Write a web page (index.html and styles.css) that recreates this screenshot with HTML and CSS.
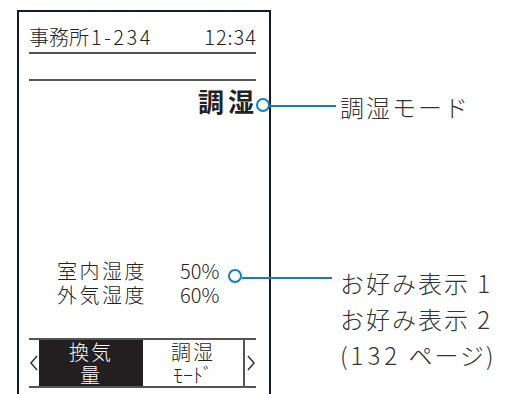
FILE: index.html
```html
<!DOCTYPE html>
<html lang="ja">

<head>
    <meta charset="UTF-8">
    <meta name="viewport" content="width=device-width, initial-scale=1.0">
    <title>調湿モード</title>
    <link rel="stylesheet" href="styles.css">
</head>

<body>
    <div class="page">
        <div class="device">
            <div class="status">
                <span>事務所<span class="num">1-234</span></span>
                <span class="clock">12:34</span>
            </div>
            <div class="rule"></div>

            <div class="mode">
                <span class="mode-name">調湿</span>
                <span class="pin"></span>
            </div>

            <div class="readings">
                <span class="label">室内湿度</span>
                <span>50%</span>
                <span class="pin"></span>
                <span class="label">外気湿度</span>
                <span>60%</span>
            </div>

            <div class="menu">
                <span class="arrow">
                    <svg width="8" height="16" viewBox="0 0 8 16"><polyline points="7,1 1,8 7,15" /></svg>
                </span>
                <div class="menu-item active">換気<br>量</div>
                <div class="menu-item">調湿<br><span class="sub">ﾓｰﾄﾞ</span></div>
                <span class="arrow next">
                    <svg width="8" height="16" viewBox="0 0 8 16"><polyline points="1,1 7,8 1,15" /></svg>
                </span>
            </div>
        </div>

        <!-- callouts lie over the frame border -->
        <div class="callout callout-mode">
            <span class="leader"></span>
            <p>調湿モード</p>
        </div>
        <div class="callout callout-disp">
            <span class="leader"></span>
            <p>お好み表示 1<br>お好み表示 2<br>(<span class="num">132</span> ページ)</p>
        </div>
    </div>
</body>

</html>
```

FILE: styles.css
```css
* {
    padding: 0;
    margin: 0;
    box-sizing: border-box;
}

body {
    background-color: #fff;
    font-family: "Noto Sans CJK JP", "Noto Sans", sans-serif;
}

.page {
    position: relative;
    width: 513px;
    height: 394px;
    overflow: hidden;
}

.device {
    margin: 10px 0 0 17px;
    width: 254px;
    height: 400px;
    border: 2px solid #17173a;
    border-bottom: none;
    padding: 0 13px 0 10px;
    color: #222;
    font-weight: 300;
}

.status {
    display: flex;
    justify-content: space-between;
    margin-top: 13px;
    padding-bottom: 3px;
    font-size: 20px;
    line-height: 24px;
    border-bottom: 2px solid #555;
}

.status .num {
    margin-left: 2px;
    letter-spacing: 2.5px;
}

.clock {
    letter-spacing: 1px;
    margin-right: -1px;
}

.rule {
    margin-top: 25px;
    border-top: 2px solid #555;
}

.mode {
    display: flex;
    justify-content: flex-end;
    align-items: center;
    margin-top: 5px;
    margin-right: -14px;
}

.mode-name {
    font-size: 26px;
    line-height: 30px;
    font-weight: bold;
    letter-spacing: 4px;
    margin-right: -2px;
}

.mode .pin {
    margin-top: 8px;
}

.pin {
    display: block;
    width: 14px;
    height: 14px;
    border: 2px solid #0c7fc6;
    border-radius: 50%;
    background-color: #fff;
}

.readings {
    display: grid;
    grid-template-columns: 123px 48px 14px;
    margin-top: 143px;
    margin-left: 28px;
    font-size: 20px;
    line-height: 23px;
}

.readings .label {
    letter-spacing: 2.5px;
}

.readings .pin {
    grid-column: 3;
    grid-row: 1;
    align-self: start;
    margin-top: 10px;
}

.menu {
    display: grid;
    grid-template-columns: 10px 104px 100px 2px 11px;
    margin-top: 32px;
    border-top: 2px solid #555;
    border-bottom: 2px solid #555;
}

.menu-item {
    font-size: 20px;
    line-height: 23px;
    letter-spacing: 2px;
    text-align: center;
}

.menu-item.active {
    background-color: #231f20;
    color: #fff;
}

.menu-item + .menu-item {
    border-right: 2px solid #555;
    grid-column: 3 / span 2;
}

.sub {
    letter-spacing: 0;
}

.arrow {
    display: flex;
    align-items: center;
    justify-content: center;
}

.arrow svg polyline {
    fill: none;
    stroke: #333;
    stroke-width: 1.5;
}

.callout {
    position: absolute;
    display: flex;
    align-items: flex-start;
    color: #333;
    font-size: 24px;
    line-height: 36px;
    font-weight: 300;
    letter-spacing: 2px;
}

.callout .num {
    margin-left: 1px;
    letter-spacing: 4px;
}

.leader {
    display: block;
    height: 2px;
    background-color: #0c7fc6;
}

.callout-mode {
    left: 270px;
    top: 89px;
}

.callout-mode .leader {
    width: 66px;
    margin: 16px 4px 0 0;
}

.callout-disp {
    left: 242px;
    top: 265px;
}

.callout-disp .leader {
    width: 90px;
    margin: 12px 8px 0 0;
}
```
